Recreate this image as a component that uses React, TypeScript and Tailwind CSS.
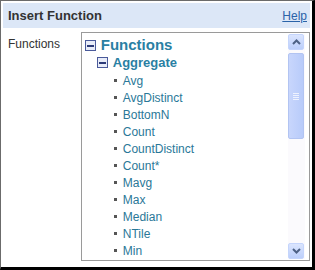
import React from 'react';

const items = ['Avg', 'AvgDistinct', 'BottomN', 'Count', 'CountDistinct', 'Count*', 'Mavg', 'Max', 'Median', 'NTile', 'Min'];

const MinusBox: React.FC = () => (
    <span className="inline-flex w-[11px] h-[11px] items-center justify-center border border-[#4a5a9a] bg-[#e8ecf8] shrink-0">
        <span className="block w-[7px] h-[2px] bg-[#2c3a78]" />
    </span>
);

const ScrollArrow: React.FC<{ up?: boolean }> = ({ up }) => (
    <div className="w-[16px] h-[16px] rounded-[2px] bg-gradient-to-b from-[#dbe5fe] to-[#bccffb] border border-[#c5d5fc] flex items-center justify-center">
        <svg width="9" height="6" viewBox="0 0 9 6">
            <path d={up ? 'M1 5 L4.5 1.5 L8 5' : 'M1 1 L4.5 4.5 L8 1'} stroke="#4d6185" strokeWidth="2" fill="none" />
        </svg>
    </div>
);

const App: React.FC = () => {
    return (
        <div className="w-[315px] h-[270px] bg-white border-t border-l border-[#6b6b6b] border-r-[3px] border-b-[3px] border-r-black border-b-black p-[2px] flex flex-col" style={{ fontFamily: '"Liberation Sans", Arial, sans-serif' }}>
            <div className="h-[25px] bg-[#dce7f7] flex items-center justify-between pl-[5px] pr-[3px]">
                <span className="text-[13px] font-bold text-[#333]">Insert Function</span>
                <a href="#" className="text-[12px] text-[#2a63a8] underline">Help</a>
            </div>
            <div className="flex pt-[4px] pl-[5px]">
                <span className="w-[73px] text-[12px] text-[#333] pt-[3px]">Functions</span>
                <div className="w-[230px] h-[229px] border border-[#9a9a9a] flex">
                    <div className="flex-1 pl-[3px] pt-[4px]">
                        <div className="flex items-center gap-[5px] h-[17px]">
                            <MinusBox />
                            <span className="text-[15px] font-bold text-[#2a7fa3]">Functions</span>
                        </div>
                        <div className="flex items-center gap-[5px] h-[17px] pl-[12px]">
                            <MinusBox />
                            <span className="text-[13px] font-bold text-[#2a7fa3]">Aggregate</span>
                        </div>
                        <ul className="pl-[29px] pt-[1px]">
                            {items.map((it) => (
                                <li key={it} className="flex items-center h-[17px] gap-[6px]">
                                    <span className="block w-[3px] h-[3px] bg-[#555]" />
                                    <span className="text-[12px] text-[#2a7898]">{it}</span>
                                </li>
                            ))}
                        </ul>
                    </div>
                    <div className="w-[17px] mr-[4px] my-[1px] bg-[#fbfafd] flex flex-col">
                        <ScrollArrow up />
                        <div className="mt-[3px] h-[86px] w-[16px] rounded-[2px] bg-gradient-to-r from-[#c8d6fc] to-[#b8cbfa] border border-[#b2c4f2] flex items-center justify-center">
                            <div className="flex flex-col gap-[1px]">
                                <span className="block w-[6px] h-[1px] bg-[#eef2fe]" />
                                <span className="block w-[6px] h-[1px] bg-[#eef2fe]" />
                                <span className="block w-[6px] h-[1px] bg-[#eef2fe]" />
                                <span className="block w-[6px] h-[1px] bg-[#eef2fe]" />
                            </div>
                        </div>
                        <div className="flex-1" />
                        <ScrollArrow />
                    </div>
                </div>
            </div>
        </div>
    );
};

export default App;
